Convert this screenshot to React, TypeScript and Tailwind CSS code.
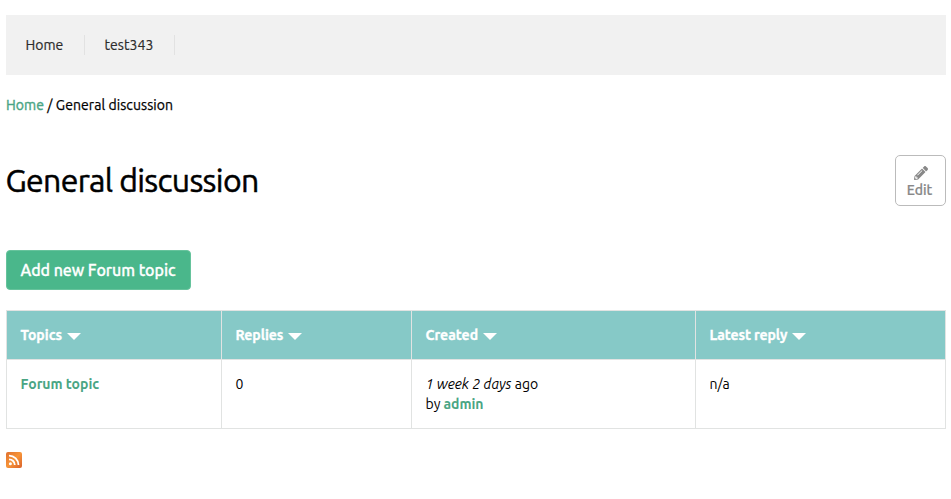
import React from "react";
import { FaPencilAlt } from "react-icons/fa";

const columns = [
  { label: "Topics", tracking: "tracking-[0px]" },
  { label: "Replies", tracking: "tracking-[-0.05px]" },
  { label: "Created", tracking: "tracking-[0px]" },
  { label: "Latest reply", tracking: "tracking-[-0.1px]" },
];

function RssIcon() {
  return (
    <svg width="16" height="16" viewBox="0 0 16 16" className="block">
      <defs>
        <linearGradient id="rss" x1="0" y1="0" x2="1" y2="1">
          <stop offset="0" stopColor="#df7030" />
          <stop offset="0.5" stopColor="#f79438" />
          <stop offset="1" stopColor="#d9612a" />
        </linearGradient>
      </defs>
      <rect width="16" height="16" rx="2" fill="url(#rss)" />
      <circle cx="4.4" cy="11.7" r="1.5" fill="#fff" />
      <path d="M3 7.3a5.8 5.8 0 0 1 5.8 5.8M3 3.6a9.5 9.5 0 0 1 9.5 9.5" fill="none" stroke="#fff" strokeWidth="1.8" />
    </svg>
  );
}

export default function App() {
  return (
    <div className="h-[499px] w-[951px] overflow-hidden bg-white pt-[15px] pr-[5px] pl-[6px] font-['Ubuntu','Noto_Sans',sans-serif] text-[14px] leading-5 text-black">
      <nav className="flex h-[60px] items-center bg-[#f1f1f1] text-[#2c2c2c] [-webkit-text-stroke:0.2px]">
        <a className="w-[79px] border-r border-[#e2e2e2] pl-[19.5px]">Home</a>
        <a className="w-[90px] border-r border-[#e2e2e2] pl-[19.5px] tracking-[0.08px]">test343</a>
      </nav>
      <div className="mt-5 tracking-[0.07px] [-webkit-text-stroke:0.25px]">
        <a className="text-[#4aa584] [-webkit-text-stroke:0.4px]">Home</a> / General discussion
      </div>
      <header className="mt-10 flex h-[51px] items-center justify-between">
        <h1 className="mt-[-2px] -ml-[0.5px] text-[32px] leading-10 tracking-[-0.67px] [-webkit-text-stroke:0.5px]">General discussion</h1>
        <button className="flex h-[51px] w-[51px] flex-col items-center rounded-[5px] border border-[#bbb] pt-[10px] pr-[2px] text-[#888]">
          <FaPencilAlt className="ml-[3px] size-[14px]" />
          <span className="text-[14px] leading-5 font-medium [-webkit-text-stroke:0.2px]">Edit</span>
        </button>
      </header>
      <button className="mt-11 flex h-10 w-[185px] items-center rounded-[4px] border border-[#66c39c] bg-[#4ab78b] pl-[13.5px] text-[16px] font-medium tracking-[-0.05px] whitespace-nowrap text-white [-webkit-text-stroke:0.3px]">
        Add new Forum topic
      </button>
      <div className="mt-5 grid w-[940px] grid-cols-[215px_190px_284px_250px] border-t border-l border-[#e1e3e2]">
        {columns.map((c) => (
          <div key={c.label} className="flex h-[49px] items-center border-r border-b border-[#e1e3e2] bg-[#86c9c7] pl-[13.5px] font-bold text-white">
            <span className={`${c.tracking} [-webkit-text-stroke:0.3px]`}>{c.label}</span>
            <svg width="14" height="7" viewBox="0 0 14 7" className="mt-[2px] ml-[4.5px]">
              <path d="M0 0h14L7 7z" fill="#fff" />
            </svg>
          </div>
        ))}
        <div className="h-[69px] border-r border-b border-[#e1e3e2] pt-[14px] pl-[13.5px] font-bold tracking-[-0.03px] text-[#4aa584]">Forum topic</div>
        <div className="border-r border-b border-[#e1e3e2] pt-[14px] pl-[13.5px]">0</div>
        <div className="border-r border-b border-[#e1e3e2] pt-[14px] pl-[13.5px]">
          <div className="tracking-[0.03px]"><em>1 week 2 days</em> ago</div>
          <div className="tracking-[-0.03px]">by <a className="font-bold text-[#4aa584]">admin</a></div>
        </div>
        <div className="border-r border-b border-[#e1e3e2] pt-[14px] pl-[13.5px]">n/a</div>
      </div>
      <div className="mt-[23px]"><RssIcon /></div>
    </div>
  );
}
